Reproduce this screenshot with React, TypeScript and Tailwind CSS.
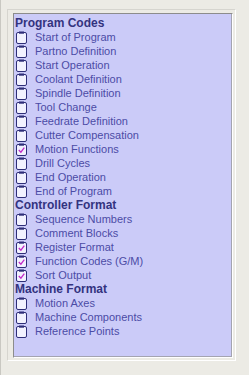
import React from 'react';

type Row = { label: string, header?: boolean, checked?: boolean };

const rows: Row[] = [
    { label: 'Program Codes', header: true },
    { label: 'Start of Program' },
    { label: 'Partno Definition' },
    { label: 'Start Operation' },
    { label: 'Coolant Definition' },
    { label: 'Spindle Definition' },
    { label: 'Tool Change' },
    { label: 'Feedrate Definition' },
    { label: 'Cutter Compensation' },
    { label: 'Motion Functions', checked: true },
    { label: 'Drill Cycles' },
    { label: 'End Operation' },
    { label: 'End of Program' },
    { label: 'Controller Format', header: true },
    { label: 'Sequence Numbers' },
    { label: 'Comment Blocks' },
    { label: 'Register Format', checked: true },
    { label: 'Function Codes (G/M)', checked: true },
    { label: 'Sort Output', checked: true },
    { label: 'Machine Format', header: true },
    { label: 'Motion Axes' },
    { label: 'Machine Components' },
    { label: 'Reference Points' },
];

const ClipIcon = ({ checked }: { checked?: boolean }) => (
    <svg width="11" height="13" viewBox="0 0 11 13" className="shrink-0">
        <rect x="0.5" y="1.5" width="10" height="11" rx="1.5" fill="#f2f2ff" stroke="#2e2e78" />
        <rect x="3" y="0.5" width="5" height="2.2" fill="#2e2e78" />
        {checked && <path d="M2.8 7 L4.9 9.2 L8.3 4.6" fill="none" stroke="#c22cc8" strokeWidth="1.3" />}
    </svg>
);

export default function App() {
    return (
        <div className="w-[249px] h-[375px] bg-[#ecebe5] border-l border-[#c9c8c2] overflow-hidden" style={{ fontFamily: '"Liberation Sans", Arial, sans-serif' }}>
            <div className="ml-[6px] mt-[9px] w-[229px] h-[352px] border border-t-[#d6d5cf] border-l-[#d6d5cf] border-b-white border-r-white">
                <div className="ml-[5px] mt-[3px] w-[220px] h-[345px] bg-[#cbcbf8] border border-t-[#8c8c8c] border-l-[#8c8c8c] border-b-white border-r-white shadow-[inset_-1px_-1px_0_#a4a4b0] pt-[2px]">
                    {rows.map((row) =>
                        row.header ? (
                            <div key={row.label} className="h-[14px] leading-[14px] pl-[1px] text-[12px] font-bold text-[#33337f]">
                                {row.label}
                            </div>
                        ) : (
                            <div key={row.label} className="h-[14px] flex items-center pl-[2px]">
                                <ClipIcon checked={row.checked} />
                                <span className="ml-[8px] text-[11px] leading-[14px] text-[#4c4ca6] whitespace-nowrap">{row.label}</span>
                            </div>
                        )
                    )}
                </div>
            </div>
        </div>
    );
}
